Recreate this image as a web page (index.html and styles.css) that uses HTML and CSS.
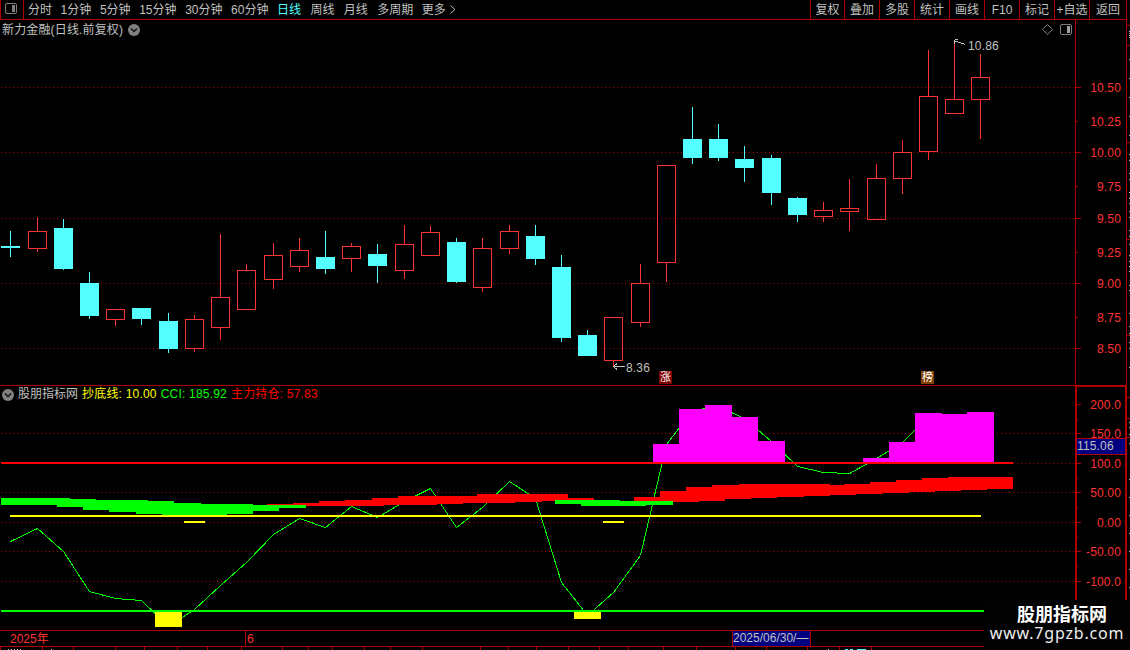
FILE: index.html
```html
<!DOCTYPE html>
<html lang="zh-CN">
<head>
    <meta charset="UTF-8">
    <meta name="viewport" content="width=device-width, initial-scale=1.0">
    <title>新力金融 日线</title>
    <link rel="stylesheet" href="styles.css">
</head>
<body>

    <div class="terminal">
        <div class="workspace">
            <!-- Period tabs and tools -->
            <div class="toolbar">
                <div class="layout-btn">
                    <svg width="12" height="11" viewBox="0 0 12 11">
                        <rect x="0.5" y="0.5" width="11" height="10" rx="1.5" fill="none" stroke="#808080"/>
                        <rect x="7" y="2" width="3" height="7" fill="#808080"/>
                    </svg>
                </div>
                <div class="periods">
                    <span>分时</span>
                    <span>1分钟</span>
                    <span>5分钟</span>
                    <span>15分钟</span>
                    <span>30分钟</span>
                    <span>60分钟</span>
                    <span class="active">日线</span>
                    <span class="wide">周线</span>
                    <span class="wide">月线</span>
                    <span class="wide">多周期</span>
                    <span class="more">更多
                        <svg width="6" height="9" viewBox="0 0 6 9"><path d="M0.5 0.5L5 4.5L0.5 8.5" fill="none" stroke="#c0c0c0"/></svg>
                    </span>
                </div>
                <div class="tools">
                    <span>复权</span>
                    <span>叠加</span>
                    <span>多股</span>
                    <span>统计</span>
                    <span>画线</span>
                    <span>F10</span>
                    <span>标记</span>
                    <span>+自选</span>
                    <span class="back">返回</span>
                </div>
            </div>

            <!-- Daily candles -->
            <div class="pane">
                <div class="pane-title">
                    <span>新力金融(日线.前复权)</span>
                    <svg width="12" height="12" viewBox="0 0 12 12"><circle cx="6" cy="6" r="6" fill="#808080"/><path d="M3 4.5L6 7.5L9 4.5" fill="none" stroke="#111" stroke-width="1.5"/></svg>
                </div>
                <div class="pane-icons">
                    <svg width="11" height="11" viewBox="0 0 11 11"><path d="M5.5 0.5L10.5 5.5L5.5 10.5L0.5 5.5Z" fill="none" stroke="#808080"/></svg>
                    <svg width="12" height="11" viewBox="0 0 12 11"><rect x="0.5" y="0.5" width="11" height="10" rx="1.5" fill="none" stroke="#808080"/><rect x="7" y="2" width="3" height="7" fill="#a0a0a0"/></svg>
                </div>
                <svg id="price-chart" class="chart" width="1127" height="366" viewBox="0 20 1127 366"></svg>
                <span class="flag flag-rise">涨</span>
                <span class="flag flag-list">榜</span>
            </div>

            <!-- CCI indicator -->
            <div class="pane">
                <div class="pane-title indicator-title">
                    <svg width="12" height="12" viewBox="0 0 12 12"><circle cx="6" cy="6" r="6" fill="#808080"/><path d="M3 4.5L6 7.5L9 4.5" fill="none" stroke="#111" stroke-width="1.5"/></svg>
                    <span class="name">股朋指标网</span>
                    <span class="yellow">抄底线: 10.00</span>
                    <span class="green">CCI: 185.92</span>
                    <span class="red">主力持仓: 57.83</span>
                </div>
                <svg id="cci-chart" class="chart" width="1127" height="244" viewBox="0 386 1127 244"></svg>
            </div>

            <!-- Dates -->
            <div class="timeline">
                <span class="year">2025年</span>
                <span class="month">6</span>
                <span class="cursor-date">2025/06/30/—</span>
            </div>
            <svg id="status-edge" class="chart" width="1127" height="3" viewBox="0 647 1127 3"></svg>
        </div>
        <svg id="side-edge" class="side-edge" width="3" height="650" viewBox="1127 0 3 650"></svg>
        <div class="watermark">
            <div class="site-name">股朋指标网</div>
            <div class="site-url">www.7gpzb.com</div>
        </div>
    </div>

    <script>
        const NS = 'http://www.w3.org/2000/svg';
        const RED = '#ff3232';
        const CYAN = '#54ffff';
        const FRAME = '#b00000';

        // x, high, body top, body bottom, low, rising
        const candles = [
            [10, 231, 246, 248, 257, 0], [37, 217, 231, 249, 252, 1],
            [63, 219, 228, 269, 270, 0], [89, 272, 283, 316, 319, 0],
            [115, 309, 309, 320, 326, 1], [141, 308, 308, 319, 325, 0],
            [168, 313, 321, 349, 353, 0], [194, 315, 319, 349, 352, 1],
            [220, 234, 297, 328, 340, 1], [246, 264, 270, 310, 310, 1],
            [273, 243, 255, 280, 289, 1], [299, 238, 250, 267, 272, 1],
            [325, 231, 257, 269, 274, 0], [351, 243, 246, 259, 272, 1],
            [377, 244, 254, 266, 283, 0], [404, 225, 244, 271, 279, 1],
            [430, 226, 232, 256, 256, 1], [456, 238, 242, 282, 283, 0],
            [482, 238, 248, 288, 292, 1], [509, 225, 231, 249, 254, 1],
            [535, 225, 236, 259, 265, 0], [561, 255, 267, 338, 342, 0],
            [587, 330, 335, 356, 356, 0], [613, 317, 317, 361, 366, 1],
            [640, 264, 283, 323, 327, 1], [666, 165, 165, 263, 282, 1],
            [692, 107, 139, 158, 164, 0], [718, 124, 139, 158, 161, 0],
            [744, 146, 159, 168, 182, 0], [771, 155, 158, 193, 205, 0],
            [797, 197, 198, 215, 222, 0], [823, 202, 210, 217, 222, 1],
            [849, 179, 208, 212, 231, 1], [876, 164, 178, 220, 220, 1],
            [902, 140, 152, 179, 194, 1], [928, 50, 96, 152, 160, 1],
            [954, 43, 99, 114, 114, 1], [980, 54, 77, 100, 139, 1]
        ];

        const cci = [
            [10, 541], [37, 528], [63, 551], [89, 591], [115, 598], [141, 600], [168, 626], [194, 609],
            [220, 585], [246, 562], [273, 534], [299, 518], [325, 527], [351, 506], [377, 517], [404, 501],
            [430, 488], [456, 527], [482, 507], [509, 481], [535, 498], [561, 582], [587, 615], [613, 592],
            [640, 555], [666, 444], [692, 410], [718, 406], [744, 418], [771, 441], [797, 466], [823, 472],
            [849, 473], [876, 458], [902, 442], [928, 416], [954, 415], [980, 412]
        ];

        // left, right, top, bottom
        const redBand = [
            [267, 293, 504, 506], [293, 319, 503, 506], [319, 345, 501, 506], [345, 372, 500, 506],
            [372, 384, 498, 506], [384, 398, 498, 505], [398, 437, 496, 505], [437, 463, 496, 504],
            [463, 477, 496, 503], [477, 515, 494, 503], [515, 542, 494, 502], [542, 568, 494, 501],
            [568, 594, 498, 501], [634, 660, 497, 502], [660, 686, 491, 502], [686, 699, 487, 502],
            [699, 712, 487, 501], [712, 725, 485, 501], [725, 739, 485, 499], [739, 751, 484, 499],
            [751, 777, 484, 498], [777, 804, 484, 497], [804, 830, 484, 496], [830, 844, 485, 495],
            [844, 856, 484, 495], [856, 870, 484, 494], [870, 882, 482, 494], [882, 896, 482, 493],
            [896, 909, 480, 493], [909, 922, 480, 492], [922, 935, 478, 492], [935, 948, 478, 491],
            [948, 961, 477, 491], [961, 987, 477, 490], [987, 1013, 477, 489]
        ];
        const greenBand = [
            [1, 57, 498, 505], [57, 70, 498, 507], [70, 83, 499, 507], [83, 96, 499, 510],
            [96, 109, 500, 510], [109, 136, 500, 512], [136, 148, 500, 514], [148, 162, 501, 514],
            [162, 174, 501, 515], [174, 201, 503, 515], [201, 227, 504, 515], [227, 253, 504, 514],
            [253, 279, 505, 511], [279, 306, 505, 508], [555, 581, 500, 504], [581, 620, 500, 506],
            [620, 646, 501, 506], [646, 673, 501, 505]
        ];
        const columns = [
            [653, 679, 444], [679, 705, 409], [705, 732, 405], [732, 758, 417], [758, 785, 441],
            [863, 889, 458], [889, 915, 442], [915, 942, 413], [942, 967, 414], [967, 994, 412]
        ];

        function add(svg, tag, attrs, text) {
            const el = document.createElementNS(NS, tag);
            for (const key in attrs) el.setAttribute(key, attrs[key]);
            if (text) el.textContent = text;
            svg.appendChild(el);
        }

        function box(svg, left, top, right, bottom, fill) {
            add(svg, 'rect', { x: left, y: top, width: right - left, height: bottom - top, fill: fill });
        }

        function dotted(svg, y) {
            add(svg, 'line', { x1: 1, y1: y + 0.5, x2: 1075, y2: y + 0.5, stroke: FRAME, 'stroke-dasharray': '1 3' });
        }

        function label(svg, x, y, text, fill, anchor) {
            add(svg, 'text', { x: x, y: y, fill: fill, 'text-anchor': anchor || 'end' }, text);
        }

        // Price pane
        const price = document.getElementById('price-chart');
        [87, 152, 218, 283, 348].forEach(y => dotted(price, y));
        candles.forEach(([x, high, top, bottom, low, up]) => {
            const color = up ? RED : CYAN;
            box(price, x, high, x + 1, top, color);
            box(price, x, bottom, x + 1, low, color);
            if (up) {
                add(price, 'rect', { x: x - 8.5, y: top + 0.5, width: 18, height: bottom - top - 1, fill: 'none', stroke: color });
            } else {
                box(price, x - 9, top, x + 10, bottom, color);
            }
        });
        box(price, 1075, 20, 1076, 386, FRAME);
        box(price, 1126, 20, 1127, 386, FRAME);
        box(price, 0, 385, 1127, 386, FRAME);
        [[87, '10.50'], [121, '10.25'], [152, '10.00'], [186, '9.75'], [218, '9.50'],
         [252, '9.25'], [283, '9.00'], [317, '8.75'], [348, '8.50']].forEach(([y, text], i) => {
            box(price, 1076, y, i % 2 ? 1078 : 1081, y + 1, FRAME);
            label(price, 1121, y + 5, text, RED);
        });
        add(price, 'path', { d: 'M965.5 44.5L961 43L957 41.5L954.5 41.5M958 39.5L955.5 39.5L954.5 41V44', fill: 'none', stroke: '#c0c0c0' });
        label(price, 968, 50, '10.86', '#c0c0c0', 'start');
        add(price, 'path', { d: 'M624.5 366.5H613.5M617 363.5L613.5 366.5L617 369.5', fill: 'none', stroke: '#c0c0c0' });
        label(price, 626, 372, '8.36', '#c0c0c0', 'start');

        // Indicator pane
        const ind = document.getElementById('cci-chart');
        [433, 463, 492, 522, 551, 581].forEach(y => dotted(ind, y));
        add(ind, 'polyline', { points: cci.map(([x, y]) => (x + 0.5) + ',' + (y + 0.5)).join(' '), fill: 'none', stroke: '#00ff00' });
        redBand.forEach(([l, r, t, b]) => box(ind, l, t, r, b, '#ff0000'));
        greenBand.forEach(([l, r, t, b]) => box(ind, l, t, r, b, '#00ff00'));
        columns.forEach(([l, r, t]) => box(ind, l, t, r, 462, '#ff00ff'));
        box(ind, 1, 462, 1013, 464, '#ff0000');
        box(ind, 10, 515, 981, 517, '#ffff00');
        box(ind, 184, 521, 205, 523, '#ffff00');
        box(ind, 603, 521, 624, 523, '#ffff00');
        box(ind, 1, 610, 984, 612, '#00ff00');
        box(ind, 155, 612, 182, 627, '#ffff00');
        box(ind, 574, 612, 601, 619, '#ffff00');
        box(ind, 1075, 386, 1077, 630, FRAME);
        box(ind, 1125, 386, 1127, 630, FRAME);
        box(ind, 1075, 386, 1127, 387, FRAME);
        [[404, '200.0'], [433, '150.0'], [463, '100.0'], [492, '50.00'],
         [522, '0.00'], [551, '-50.00'], [581, '-100.0']].forEach(([y, text], i) => {
            box(ind, 1077, y, 1081, y + 1, FRAME);
            if (i < 6) box(ind, 1077, y + 15, 1078, y + 16, FRAME);
            label(ind, 1121, y + 5, text, RED);
        });
        box(ind, 1077, 438, 1125, 455, FRAME);
        box(ind, 1077, 439, 1125, 454, '#000080');
        label(ind, 1077, 450, '115.06', '#c0c0c0', 'start');

        // Cell borders of the quote bar under the dates
        const edge = document.getElementById('status-edge');
        [0, 42, 73, 115, 144, 177, 207, 241, 282, 308, 332, 364, 390, 422, 480, 508, 536, 568,
         599, 628, 663, 696, 735, 766, 807, 839, 871].forEach(x => box(edge, x, 647, x + 1, 650, FRAME));
        [8, 11, 14, 17, 20, 51, 828].forEach(x => box(edge, x, 649, x + 1, 650, '#c0c0c0'));
        box(edge, 845, 649, 848, 650, CYAN);
        box(edge, 850, 649, 853, 650, CYAN);
        box(edge, 857, 649, 866, 650, CYAN);

        // Cut off quote panel on the right
        const side = document.getElementById('side-edge');
        [25, 45, 142, 239, 335, 397, 418, 437].forEach(y => box(side, 1127, y, 1130, y + 1, FRAME));
        [31, 33, 35, 37, 59, 78, 97, 116, 135, 154, 160, 173, 179, 192, 198, 203, 211, 217, 230, 236,
         244, 255, 261, 266, 271, 285, 290, 313, 326, 333, 342, 348, 367, 422, 427, 434, 443,
         479, 497, 515, 533, 551, 569, 587].forEach(y => box(side, 1129, y, 1130, y + 1, '#c0c0c0'));
    </script>

</body>
</html>
```
FILE: styles.css
```css
* {
    box-sizing: border-box;
}

body {
    margin: 0;
    background-color: #000;
    color: #c0c0c0;
    font-family: "Liberation Sans", "Noto Sans CJK SC", sans-serif;
    font-size: 12px;
    line-height: 15px;
    overflow: hidden;
}

.terminal {
    position: relative;
    display: flex;
    width: 1130px;
    height: 650px;
}

.workspace {
    display: flex;
    flex-direction: column;
    width: 1127px;
}

.toolbar {
    display: flex;
    height: 20px;
    border-bottom: 1px solid #b00000;
    border-right: 1px solid #b00000;
    white-space: nowrap;
}

.layout-btn {
    width: 24px;
    padding: 3px 0 0 4px;
    border-left: 1px solid #b00000;
    border-right: 1px solid #b00000;
}

.periods {
    display: flex;
    flex: 1;
    gap: 8.6px;
    padding: 3px 0 0 4px;
}

.periods .active {
    color: #54ffff;
}

.periods .wide {
    margin-left: 0.8px;
}

.more {
    display: flex;
    align-items: center;
    gap: 4px;
    height: 15px;
}

.more svg {
    margin-top: -2px;
}

.tools {
    display: flex;
}

.tools span {
    width: 35px;
    padding-top: 3px;
    border-left: 1px solid #b00000;
    text-align: center;
}

.tools span:first-child {
    width: 34px;
}

.tools .back {
    width: 37px;
}

.pane {
    position: relative;
}

.chart {
    display: block;
    shape-rendering: crispEdges;
}

.chart text {
    font-size: 12px;
    letter-spacing: 0.15px;
}

.pane-title {
    position: absolute;
    left: 2px;
    top: 3px;
    display: flex;
    align-items: center;
    gap: 5px;
    letter-spacing: 0.15px;
}

.pane-title svg {
    margin-top: -2px;
}

.indicator-title {
    top: 1px;
    gap: 4px;
    letter-spacing: 0.2px;
}

.indicator-title svg {
    margin-top: 0;
}

.indicator-title .name {
    letter-spacing: 0;
}

.pane-icons {
    position: absolute;
    left: 1042px;
    top: 4px;
    display: flex;
    gap: 7px;
}

.yellow {
    color: #ffff00;
}

.green {
    color: #00ff00;
}

.red {
    color: #ff0000;
}

.flag {
    position: absolute;
    top: 351px;
    width: 13px;
    height: 13px;
    color: #fff;
    font-size: 11px;
    line-height: 13px;
    text-align: center;
}

.flag-rise {
    left: 659px;
    background-color: #800000;
}

.flag-list {
    left: 921px;
    background-color: #804000;
}

.timeline {
    display: flex;
    height: 17px;
    border-top: 1px solid #b00000;
    border-bottom: 1px solid #b00000;
    color: #ff3232;
}

.year {
    width: 245px;
    padding: 1px 0 0 10px;
}

.month {
    width: 487px;
    padding: 1px 0 0 1px;
    border-left: 1px solid #b00000;
}

.cursor-date {
    width: 79px;
    border-left: 1px solid #b00000;
    border-right: 1px solid #b00000;
    background-color: #000080;
    color: #c0c0c0;
    white-space: nowrap;
    overflow: hidden;
}

.side-edge {
    display: block;
}

.watermark {
    position: absolute;
    right: 0;
    bottom: 0;
    width: 146px;
    height: 50px;
    background-color: #020202;
    color: #fff;
    text-align: center;
}

.site-name {
    margin-top: 4px;
    padding-left: 10px;
    font-size: 18px;
    font-weight: bold;
    line-height: 22px;
}

.site-url {
    color: #eee;
    font-family: "Noto Sans", sans-serif;
    font-size: 16px;
    line-height: 15px;
    letter-spacing: 0.8px;
}
```
